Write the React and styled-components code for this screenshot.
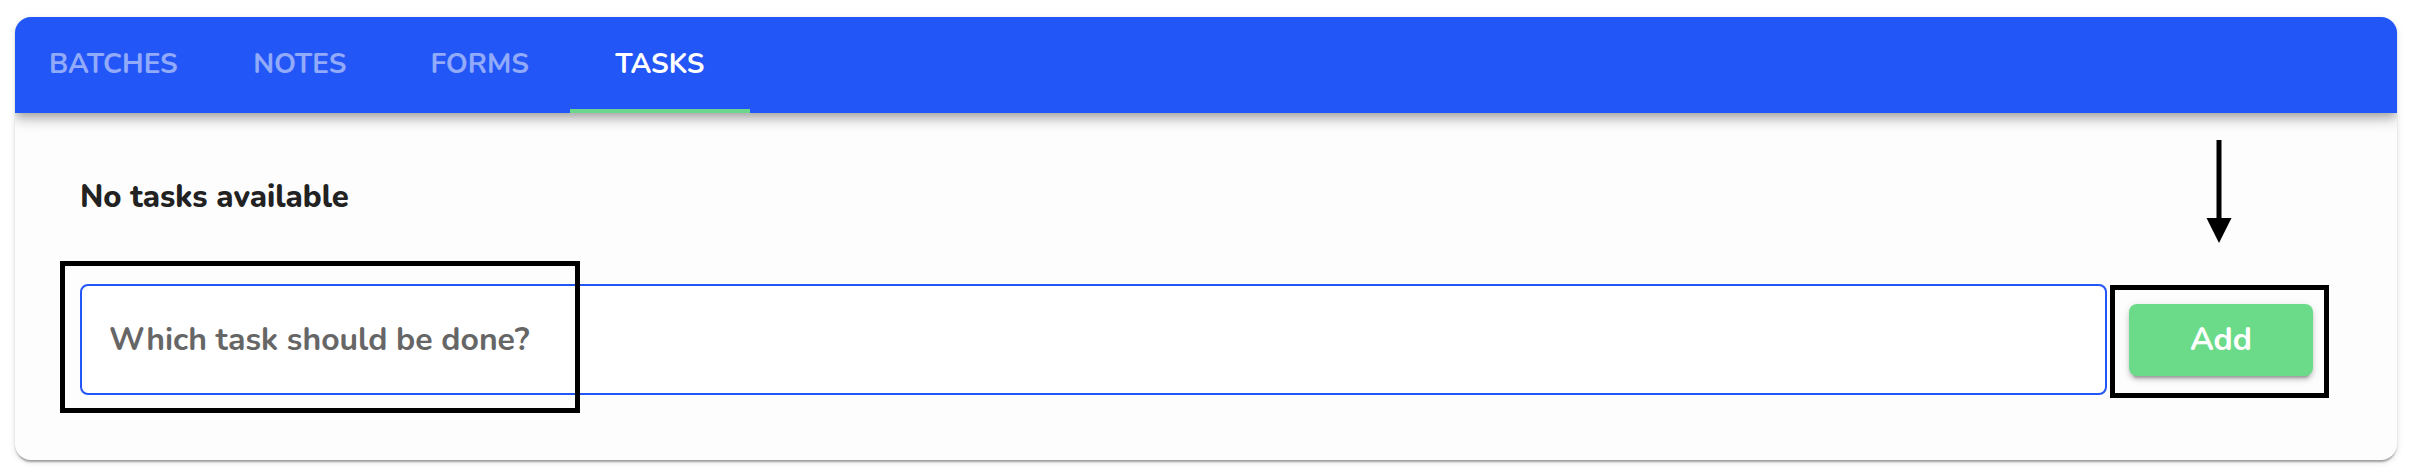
import React from "react";
import styled, { createGlobalStyle } from "styled-components";

const GlobalStyle = createGlobalStyle`
   * {
      box-sizing: border-box;
   }
   body {
      margin: 0;
      background: #ffffff;
      font-family: "Nunito", "Lato", "Open Sans", sans-serif;
   }
`;

const Page = styled.div`
   position: relative;
   width: 2412px;
   height: 476px;
   padding: 17px 15px;
`;

const Card = styled.div`
   width: 100%;
   border-radius: 16px;
   overflow: hidden;
   background: #fdfdfd;
   box-shadow: 0 4px 2px -2px rgba(0, 0, 0, 0.2), 0 2px 2px 0 rgba(0, 0, 0, 0.14),
      0 2px 6px 0 rgba(0, 0, 0, 0.12);
`;

const TabBar = styled.div`
   position: relative;
   z-index: 1;
   display: flex;
   height: 96px;
   padding-left: 2px;
   background: #2356f6;
   box-shadow: 0 4px 8px -2px rgba(0, 0, 0, 0.2), 0 8px 10px 0 rgba(0, 0, 0, 0.14),
      0 2px 20px 0 rgba(0, 0, 0, 0.12);
`;

const Tab = styled.div`
   position: relative;
   display: flex;
   align-items: center;
   justify-content: center;
   min-width: 180px;
   padding: 0 32px 2px;
   font-size: 28px;
   font-weight: 700;
   text-transform: uppercase;
   color: ${(p) => (p.$active ? "#ffffff" : "rgba(255, 255, 255, 0.5)")};

   &::after {
      content: "";
      display: ${(p) => (p.$active ? "block" : "none")};
      position: absolute;
      left: 0;
      right: 0;
      bottom: 0;
      height: 4px;
      background: #6bd68c;
   }
`;

const Body = styled.div`
   padding: 64px 84px 65px 65px;
`;

const Empty = styled.div`
   height: 40px;
   margin-bottom: 67px;
   font-size: 31px;
   line-height: 40px;
   font-weight: 800;
   color: #222222;
`;

const Row = styled.div`
   display: flex;
   align-items: center;
   gap: 22px;
`;

const Input = styled.input`
   flex: 1;
   height: 111px;
   padding: 0 27px;
   border: 2px solid #2356f6;
   border-radius: 8px;
   outline: none;
   background: #ffffff;
   font-family: inherit;
   font-size: 32px;
   font-weight: 700;
   color: #333333;

   &::placeholder {
      color: #666666;
      opacity: 1;
   }
`;

const AddButton = styled.button`
   width: 184px;
   height: 72px;
   border: none;
   border-radius: 8px;
   background: #6bdb8a;
   color: #ffffff;
   font-family: inherit;
   font-size: 32px;
   font-weight: 700;
   cursor: pointer;
   box-shadow: 0 6px 2px -4px rgba(0, 0, 0, 0.2), 0 4px 4px 0 rgba(0, 0, 0, 0.14),
      0 2px 10px 0 rgba(0, 0, 0, 0.12);
`;

const Highlight = styled.div`
   position: absolute;
   z-index: 2;
   left: ${(p) => p.$x}px;
   top: ${(p) => p.$y}px;
   width: ${(p) => p.$w}px;
   height: ${(p) => p.$h}px;
   border: 5px solid #000000;
   pointer-events: none;
`;

const Arrow = styled.svg`
   position: absolute;
   z-index: 2;
   left: 2206px;
   top: 140px;
`;

const tabs = ["Batches", "Notes", "Forms", "Tasks"];

const App = () => {
   return (
      <>
         <GlobalStyle />
         <Page>
            <Card>
               <TabBar>
                  {tabs.map((t) => (
                     <Tab key={t} $active={t === "Tasks"}>
                        {t}
                     </Tab>
                  ))}
               </TabBar>
               <Body>
                  <Empty>No tasks available</Empty>
                  <Row>
                     <Input placeholder="Which task should be done?" />
                     <AddButton>Add</AddButton>
                  </Row>
               </Body>
            </Card>
            <Highlight $x={60} $y={261} $w={520} $h={152} />
            <Highlight $x={2110} $y={285} $w={219} $h={113} />
            <Arrow width="26" height="104" viewBox="0 0 26 104">
               <rect x="10.5" y="0" width="5" height="82" fill="#000" />
               <polygon points="0.5,78 25.5,78 13,103" fill="#000" />
            </Arrow>
         </Page>
      </>
   );
};

export default App;
